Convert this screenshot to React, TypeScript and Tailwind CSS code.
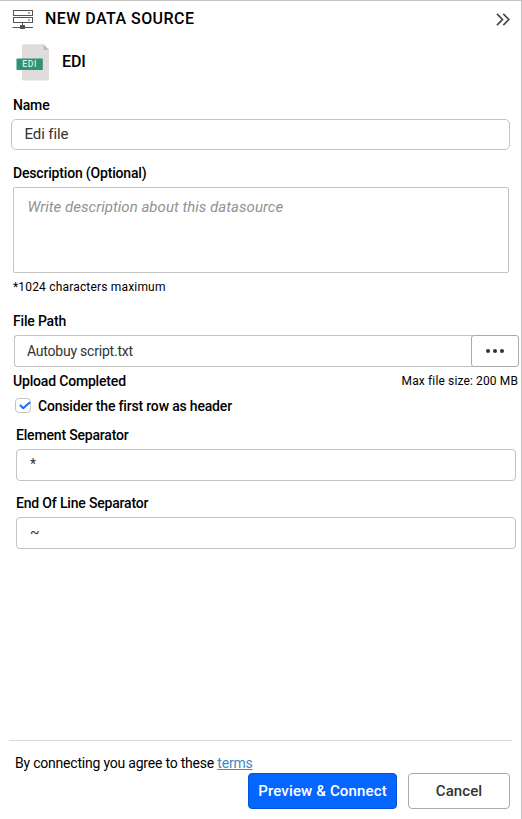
import React from "react";

function ServerIcon() {
  return (
    <svg width="22" height="20" viewBox="0 0 22 20" fill="none" stroke="#55555a" className="shrink-0">
      <rect x="1.5" y="0.5" width="19" height="5" />
      <rect x="1.5" y="7.5" width="19" height="5" />
      <path d="M16 3h2M16 10h2" />
      <path d="M10.5 13v2M0.5 17.5h20.5" />
      <rect x="8.5" y="15.5" width="4" height="3" fill="#4b4b4f" />
    </svg>
  );
}

function EdiFileIcon() {
  return (
    <svg width="34" height="37" viewBox="0 0 34 37" className="shrink-0">
      <path d="M7.5 0.3H27.5L33 6V35Q33 36.5 31.5 36.5H7.5Q6 36.5 6 35V1.8Q6 0.3 7.5 0.3Z" fill="#e0dcdc" />
      <path d="M27.5 0.3L33 6H28.5Q27.5 6 27.5 5Z" fill="#bdbaba" />
      <rect x="0.5" y="14.5" width="26.3" height="11.5" rx="0.8" fill="#2f9370" />
      <text x="13.7" y="23.3" textAnchor="middle" fontSize="8.6" fontWeight="500" letterSpacing="0.6" fill="#d8f0e6">
        EDI
      </text>
    </svg>
  );
}

function Label({ children, className = "" }: { children: React.ReactNode; className?: string }) {
  return (
    <div className={"text-[14px] leading-4 font-medium tracking-[-0.18px] whitespace-nowrap text-black " + className}>
      {children}
    </div>
  );
}

export default function App() {
  return (
    <div className="flex h-[819px] w-[522px] flex-col overflow-hidden border-t border-r border-[#c3c3c3] bg-white font-[Roboto,sans-serif] text-black">
      <header className="flex h-[37px] shrink-0 items-center pr-[11px] pl-[12px]">
        <ServerIcon />
        <h1 className="-mt-[2px] ml-[11px] text-[16px] leading-5 font-medium tracking-[0.45px]">NEW DATA SOURCE</h1>
        <svg width="14" height="13" viewBox="0 0 14 13" fill="none" stroke="#48484c" strokeWidth="1.7" className="ml-auto">
          <path d="M1 0.8L6.5 6.5L1 12.2M7.3 0.8L12.8 6.5L7.3 12.2" />
        </svg>
      </header>

      <div className="flex h-[48px] shrink-0 items-center pl-[16px]">
        <EdiFileIcon />
        <span className="ml-[12px] text-[16px] leading-5 font-medium tracking-[-0.1px]">EDI</span>
      </div>

      <Label className="mt-[11px] ml-[13px]">Name</Label>
      <div className="mt-[6px] mr-[11px] ml-[11px] flex h-[31px] shrink-0 items-center rounded-[5px] border border-[#c3c3c3] pl-[12.5px] text-[15px] tracking-[-0.1px] text-[#333]">
        Edi file
      </div>

      <Label className="mt-[15px] ml-[13px]">Description (Optional)</Label>
      <div className="mt-[6px] mr-[12px] ml-[13px] h-[86px] shrink-0 rounded-[2px] border border-[#c3c3c3] pt-[10px] pl-[13.5px] text-[15px] leading-[18px] tracking-[0.03px] text-[#929292] italic">
        Write description about this datasource
      </div>
      <div className="mt-[7px] ml-[13px] text-[12px] leading-[14px] tracking-[0.18px]">*1024 characters maximum</div>

      <Label className="mt-[19px] ml-[13px]">File Path</Label>
      <div className="mt-[6px] mr-[2px] ml-[14px] flex h-[32px] shrink-0">
        <div className="-mr-[2px] flex flex-1 items-center rounded-l-[3px] border border-r-0 border-[#c3c3c3] pl-[12px] text-[14px] tracking-[-0.22px] text-[#333]">
          Autobuy script.txt
        </div>
        <button className="flex w-[48px] items-center justify-center gap-[3px] rounded-[3px] border border-[#aaa] bg-white">
          <i className="size-[4px] rounded-full bg-[#333]" />
          <i className="size-[4px] rounded-full bg-[#333]" />
          <i className="size-[4px] rounded-full bg-[#333]" />
        </button>
      </div>

      <div className="mt-[6px] mr-[3px] ml-[13px] flex h-4 shrink-0 items-center justify-between">
        <Label>Upload Completed</Label>
        <span className="text-[12px] tracking-[0.13px]">Max file size: 200 MB</span>
      </div>

      <div className="mt-[8px] ml-[15px] flex h-[17px] shrink-0 items-center">
        <span className="-mt-px flex h-[15px] w-4 items-center justify-center rounded-[4px] border border-[#c3c3c3]">
          <svg width="12" height="9" viewBox="0 0 12 9" fill="none" stroke="#1769ff" strokeWidth="2" className="mt-px ml-[3px] shrink-0">
            <path d="M1 4L4.2 7.2L11 1.2" />
          </svg>
        </span>
        <Label className="ml-[7px]">Consider the first row as header</Label>
      </div>

      <Label className="mt-[13px] ml-[16px]">Element Separator</Label>
      <div className="mt-[6px] mr-[5px] ml-[16px] flex h-[32px] shrink-0 items-center rounded-[4px] border border-[#c3c3c3] pb-[2px] pl-[13px] text-[14px] text-[#333]">
        *
      </div>
      <Label className="mt-[14px] ml-[16px]">End Of Line Separator</Label>
      <div className="mt-[6px] mr-[5px] ml-[16px] flex h-[32px] shrink-0 items-center rounded-[4px] border border-[#c3c3c3] pb-[2px] pl-[13px] text-[14px] text-[#333]">
        ~
      </div>

      <footer className="mt-auto mr-[9px] ml-[9px] h-[79px] shrink-0 border-t border-[#d9d9d9]">
        <p className="mt-[14px] ml-[6px] text-[14px] leading-4 tracking-[-0.21px] whitespace-nowrap">
          By connecting you agree to these{" "}
          <a className="text-[#4488c5] underline">terms</a>
        </p>
        <div className="mt-[2px] mr-[2px] flex justify-end gap-[11px]">
          <button className="h-[36px] w-[149px] rounded-[4px] border border-[#0054d8] bg-[#0565ff] text-[15px] font-medium tracking-[0.15px] whitespace-nowrap text-white">
            Preview &amp; Connect
          </button>
          <button className="h-[36px] w-[102px] rounded-[4px] border border-[#aaa] text-[15px] font-medium tracking-[0.1px] text-[#333]">
            Cancel
          </button>
        </div>
      </footer>
    </div>
  );
}
